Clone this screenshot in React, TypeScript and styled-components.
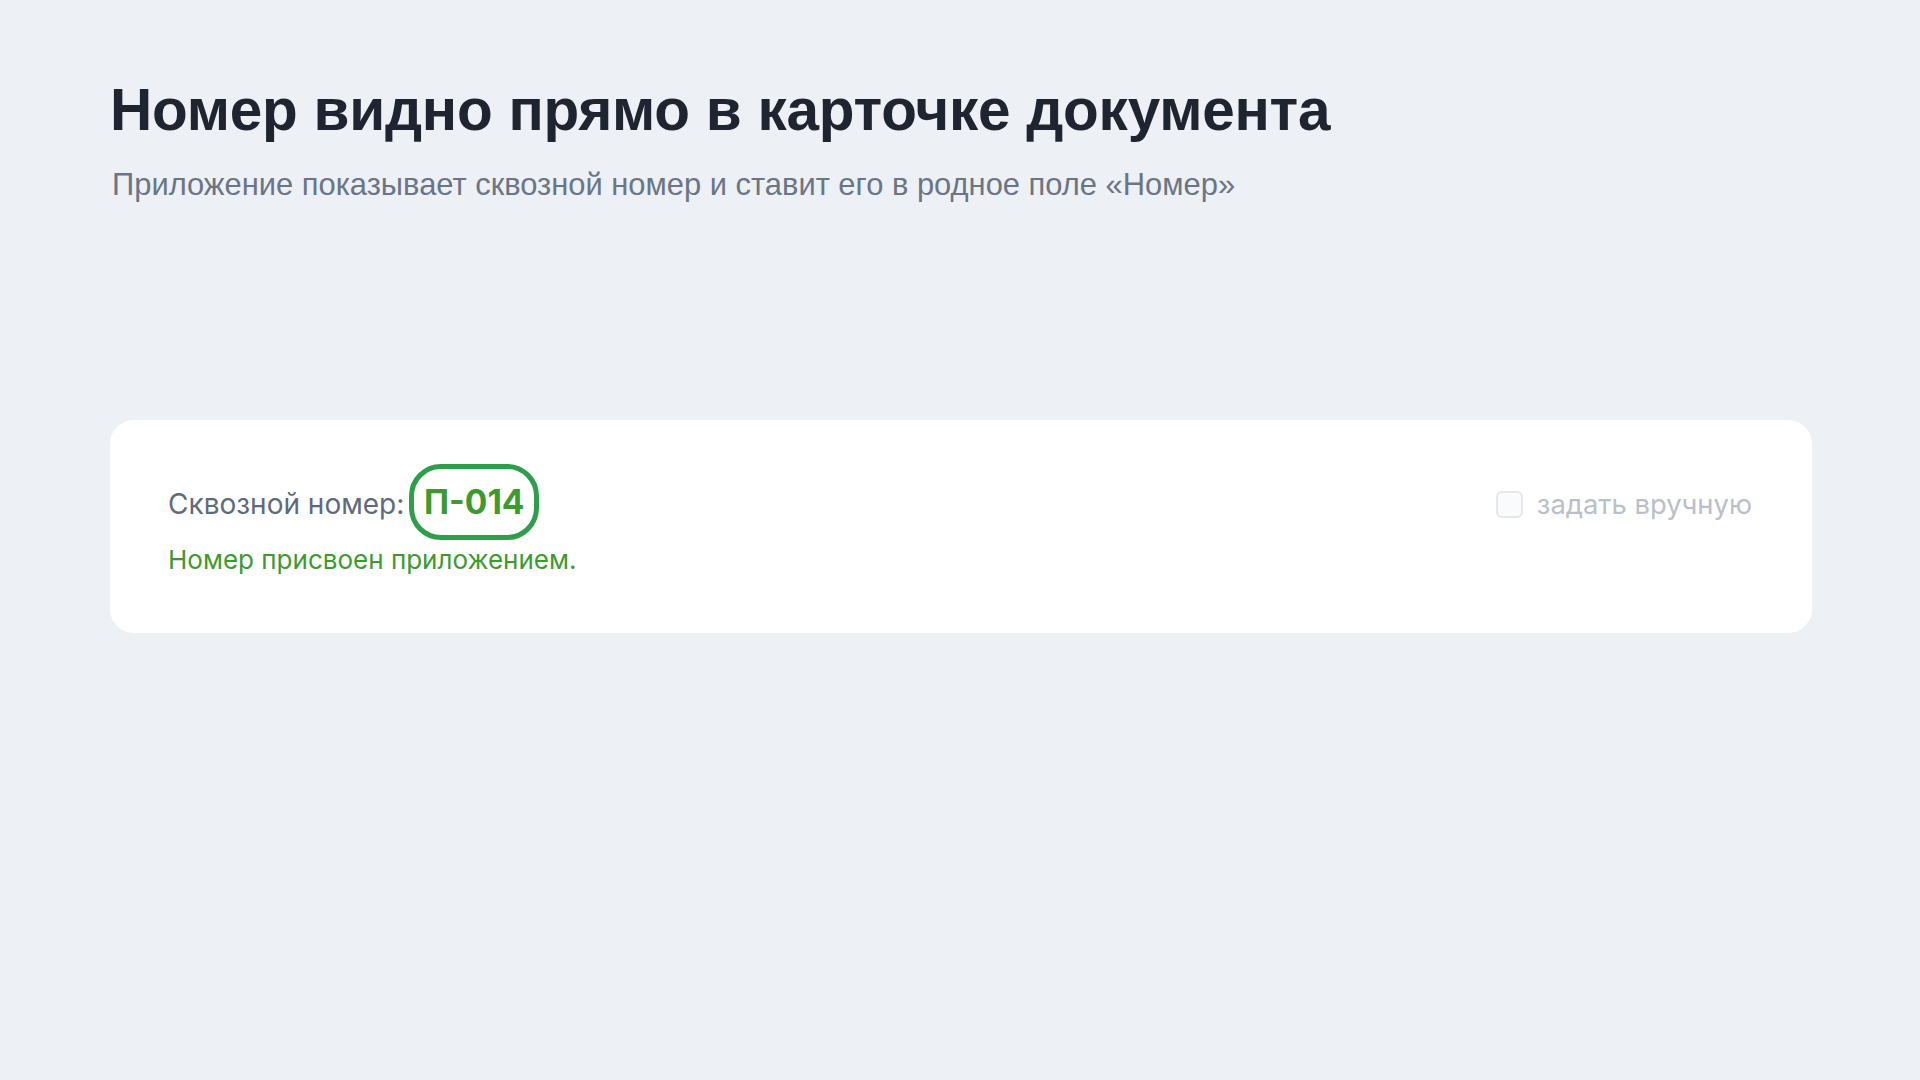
import styled, { createGlobalStyle } from "styled-components";

const GlobalStyle = createGlobalStyle`
  html, body {
    margin: 0;
    padding: 0;
    background: #edf1f5;
  }
  body {
    font-family: "Liberation Sans", Arial, sans-serif;
  }
`;

const Page = styled.main`
  min-height: 1080px;
  box-sizing: border-box;
  padding: 74px 108px 0 110px;
`;

const Title = styled.h1`
  margin: 0;
  font-size: 58.5px;
  line-height: 72px;
  font-weight: 700;
  color: #1f2530;
  letter-spacing: -0.25px;
`;

const Subtitle = styled.p`
  margin: 21px 0 0 2px;
  font-size: 30.9px;
  line-height: 36px;
  color: #6b7585;
`;

const Card = styled.section`
  margin-top: 217px;
  background: #ffffff;
  border-radius: 24px;
  padding: 44px 60px 0 58px;
  height: 213px;
  box-sizing: border-box;
  display: flex;
  justify-content: space-between;
  align-items: flex-start;
  font-family: Inter, "Liberation Sans", sans-serif;
`;

const NumberBlock = styled.div`
  display: flex;
  flex-direction: column;
`;

const NumberRow = styled.div`
  display: flex;
  align-items: baseline;
  gap: 5px;
`;

const Label = styled.span`
  font-size: 28px;
  color: #606a7a;
`;

const Pill = styled.span`
  display: inline-flex;
  align-items: center;
  justify-content: center;
  width: 130px;
  height: 76px;
  box-sizing: border-box;
  border: 5px solid #2e9e4a;
  border-radius: 32px;
  font-size: 33.5px;
  font-weight: 700;
  color: #3d9a2f;
`;

const Status = styled.span<{ $tone: "ok" | "warn" }>`
  margin-top: 4px;
  font-size: 26px;
  color: ${(p) => (p.$tone === "ok" ? "#3d9a2f" : "#c0392b")};
`;

const Manual = styled.label`
  display: flex;
  align-items: center;
  gap: 14px;
  margin-top: 23px;
  font-size: 27.4px;
  color: #b9c0c9;
  cursor: default;
`;

const Box = styled.span`
  width: 27px;
  height: 27px;
  box-sizing: border-box;
  border: 2px solid #e4e7eb;
  border-radius: 6px;
  background: #fafbfc;
`;

export default function App() {
  return (
    <>
      <GlobalStyle />
      <Page>
        <Title>Номер видно прямо в карточке документа</Title>
        <Subtitle>
          Приложение показывает сквозной номер и ставит его в родное поле «Номер»
        </Subtitle>
        <Card>
          <NumberBlock>
            <NumberRow>
              <Label>Сквозной номер:</Label>
              <Pill>П-014</Pill>
            </NumberRow>
            <Status $tone="ok">Номер присвоен приложением.</Status>
          </NumberBlock>
          <Manual>
            <Box />
            задать вручную
          </Manual>
        </Card>
      </Page>
    </>
  );
}
